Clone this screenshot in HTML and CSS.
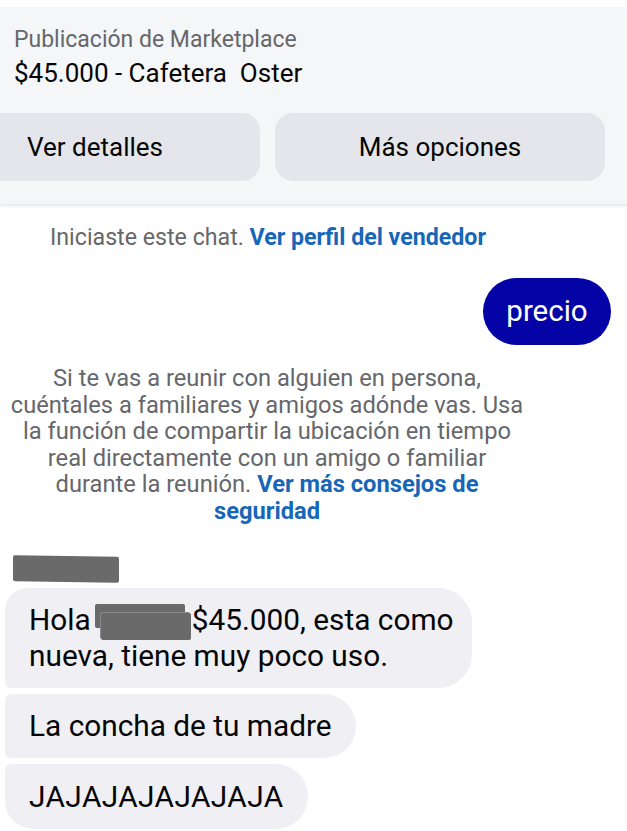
FILE: index.html
```html
<!DOCTYPE html>
<html lang="es">
<head>
<meta charset="utf-8">
<link rel="stylesheet" href="styles.css">
</head>
<body>
<div class="page">
  <section class="listing">
    <div class="listing-label">Publicación de Marketplace</div>
    <div class="listing-title">$45.000 - Cafetera&nbsp; Oster</div>
    <div class="listing-actions">
      <div class="btn btn-left">Ver detalles</div>
      <div class="btn btn-right">Más opciones</div>
    </div>
  </section>
  <div class="listing-edge"></div>

  <p class="notice">Iniciaste este chat. <span class="link">Ver perfil del vendedor</span></p>

  <div class="row-out">
    <div class="bubble-out">precio</div>
  </div>

  <p class="safety">Si te vas a reunir con alguien en persona,<br>cuéntales a familiares y amigos adónde vas. Usa<br>la función de compartir la ubicación en tiempo<br>real directamente con un amigo o familiar<br>durante la reunión. <span class="link">Ver más consejos de<br>seguridad</span></p>

  <div class="sender-name"><span class="redact redact-name"></span></div>

  <div class="bubbles-in">
    <div class="bubble-in first">Hola<span class="redact-wrap"><span class="redact r1"></span><span class="redact r2"></span></span>$45.000, esta como<br>nueva, tiene muy poco uso.</div>
    <div class="bubble-in middle">La concha de tu madre</div>
    <div class="bubble-in last">JAJAJAJAJAJAJA</div>
  </div>
</div>
</body>
</html>
```

FILE: styles.css
```css
html, body {
  margin: 0;
  padding: 0;
  background: #ffffff;
}
body {
  font-family: Roboto, "Noto Sans", sans-serif;
  color: #050505;
  width: 627px;
  height: 831px;
  overflow: hidden;
}
.page {
  padding-top: 7px;
}
.listing {
  background: #f5f6f8;
  height: 197px;
  box-sizing: border-box;
  padding: 20px 0 0 0;
  overflow: hidden;
  box-shadow: 0 2px 3px rgba(0,0,0,0.10);
  position: relative;
  z-index: 1;
}
.listing-label {
  color: #65676b;
  font-size: 23px;
  line-height: 26px;
  padding-left: 14px;
}
.listing-title {
  font-size: 26px;
  line-height: 30px;
  padding-left: 14px;
  margin-top: 5px;
}
.listing-actions {
  display: flex;
  gap: 15px;
  margin-top: 25px;
}
.btn {
  background: #e4e6eb;
  height: 68px;
  border-radius: 18px;
  font-size: 26px;
  line-height: 68px;
  box-sizing: border-box;
}
.btn-left {
  margin-left: -20px;
  flex: 0 0 280px;
  padding-left: 47px;
}
.btn-right {
  flex: 0 0 330px;
  text-align: center;
}
.listing-edge {
  height: 2px;
  margin: -2px 36px 0 62px;
  background: #c9cacd;
  border-radius: 0 0 6px 6px;
}
.notice {
  margin: 19px 0 0 50px;
  font-size: 23.2px;
  line-height: 28px;
  color: #65676b;
  white-space: nowrap;
}
.link {
  color: #1766b8;
  font-weight: 700;
}
.row-out {
  display: flex;
  justify-content: flex-end;
  padding-right: 16px;
  margin-top: 27px;
}
.bubble-out {
  background: #0404a6;
  color: #ffffff;
  font-size: 29.5px;
  height: 67px;
  line-height: 66px;
  width: 128px;
  text-align: center;
  border-radius: 34px;
}
.safety {
  width: 534px;
  margin: 20px 0 0 0;
  text-align: center;
  font-size: 23.7px;
  line-height: 26.6px;
  color: #65676b;
  white-space: nowrap;
}
.sender-name {
  margin-top: 31px;
  padding-left: 13px;
  height: 32px;
}
.redact {
  display: inline-block;
  background: #6a6a6a;
  border-radius: 2px;
}
.redact-name {
  width: 106px;
  height: 26px;
  transform: skewY(0.8deg);
}
.bubbles-in {
  display: flex;
  flex-direction: column;
  align-items: flex-start;
  gap: 6px;
  padding-left: 5px;
}
.bubble-in {
  background: #f0f0f4;
  font-size: 29.8px;
  line-height: 36px;
  padding: 14px 24px 14px 24px;
  box-sizing: border-box;
  white-space: nowrap;
}
.bubble-in.first {
  width: 467px;
  border-radius: 22px 34px 34px 6px;
}
.bubble-in.middle {
  border-radius: 6px 32px 32px 6px;
}
.bubble-in.last {
  border-radius: 6px 32px 32px 28px;
  padding-top: 15px;
  letter-spacing: 0.4px;
}
.redact-wrap {
  display: inline-block;
  position: relative;
  width: 97px;
  margin-left: 4px;
  height: 20px;
  vertical-align: -2px;
}
.redact.r1 {
  position: absolute;
  left: 0;
  top: -8px;
  width: 90px;
  height: 24px;
}
.redact.r2 {
  position: absolute;
  left: 6px;
  top: 1px;
  width: 90px;
  height: 27px;
  box-shadow: -1px -1px 0 #8a8a8a;
}
```
